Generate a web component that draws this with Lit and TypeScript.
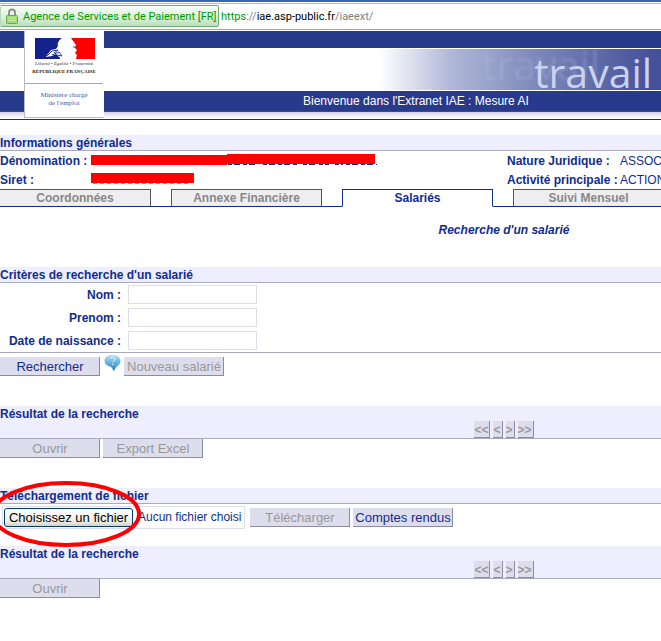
import { LitElement, html, css } from "lit";
import { customElement, property, state } from "lit/decorators.js";
import { classMap } from "lit/directives/class-map.js";

const base = css`
  * { box-sizing: border-box; }
  button, input { font: inherit; margin: 0; border-radius: 0; }
`;

@customElement("address-bar")
class AddressBar extends LitElement {
  static styles = [base, css`
    :host { display: block; }
    .bar {
      display: flex; align-items: center; height: 31px;
      border-top: 2px solid #3a66b4; border-bottom: 1px solid #fff;
      background: #fff; box-shadow: inset 0 1px #fff, inset 0 2px #b5b9c4, inset 0 -1px #a5a5a5;
      font: 11px Roboto, sans-serif; white-space: nowrap;
    }
    .identity {
      display: flex; align-items: center; gap: 5px; width: 219px; height: 22px;
      padding: 0 2px 0 5px; border: 1px solid #6fae72; border-left-color: #b7d9b7;
      border-radius: 2px; color: #009a00;
      background: linear-gradient(#f8fdf8, #d9efd9 60%, #b9deba);
    }
    .lock { flex: none; }
    .url { margin-left: 2px; color: #808080; }
    .secure { color: #009a00; }
    .host { color: #000; }
  `];
  render() {
    return html`<div class="bar">
      <span class="identity">
        <svg class="lock" width="12" height="16" viewBox="0 0 12 16" aria-hidden="true">
          <path d="M3 8V4.500a3 3 0 0 1 6 0V8" fill="none" stroke="#909090" stroke-width="2"/>
          <rect x=".5" y="7.500" width="11" height="8" rx="1" fill="#a2dc76" stroke="#66ad4a"/>
          <path d="M2 10h8M2 12.500h8" stroke="#c5eda5"/>
        </svg>
        <span>Agence de Services et de Paiement [FR]</span>
      </span>
      <span class="url"><span class="secure">https</span>://<span class="host">iae.asp-public.fr</span>/iaeext/</span>
    </div>`;
  }
}

@customElement("site-banner")
class SiteBanner extends LitElement {
  static styles = [base, css`
    :host { display: block; position: relative; border-bottom: 1px solid #102d8c; }
    .top { height: 17px; background: #283a8c; border-bottom: 1px solid #363656; }
    .middle {
      height: 43px; border: solid #fff; border-width: 1px 0;
      background: linear-gradient(90deg, #fff 380px, #b0b8d8 450px, #7b86b8 540px, #45529a 650px, #35459a 720px);
    }
    .word {
      display: block; margin-left: 534px; color: #c9d3f0;
      font: 41px/46px "Open Sans", sans-serif; position: relative;
    }
    .echo { position: absolute; left: -52px; top: -8px; color: #c5cdf0; opacity: .2; filter: blur(1px); }
    .bottom {
      height: 21px; background: #283a8c; color: #fff; border-bottom: 1px solid #4a4a68;
      font: 12px/20px "Liberation Sans", sans-serif; padding-left: 303px;
    }
    .shade { height: 7px; background: linear-gradient(#cfcfe0, #f2f2f9 60%, #fff); }
    .logo {
      position: absolute; left: 24px; top: 0; width: 80px; height: 87px; background: #fff;
      border: 1px solid #bbb; border-right-color: #fff; border-top: 0; text-align: center;
      font-family: "Liberation Serif", serif;
    }
    .flag { display: block; margin: 7px 0 0 10px; }
    .motto { font: italic 5px/9px "Liberation Serif", serif; color: #333; white-space: nowrap; }
    .rep { font: bold 5px/8px "Liberation Serif", serif; color: #222; white-space: nowrap; }
    .ministry { margin-top: 7px; border-top: 1px solid #aaa; padding-top: 7px; font-size: 7px; line-height: 8px; color: #3f5aac; }
  `];
  render() {
    return html`<header>
      <div class="top"></div>
      <div class="middle"><span class="word">travail<span class="echo" aria-hidden="true">travail</span></span></div>
      <div class="bottom">Bienvenue dans l'Extranet IAE : Mesure AI</div>
      <div class="shade"></div>
      <div class="logo">
        <svg class="flag" width="60" height="21" viewBox="0 0 60 21" aria-hidden="true">
          <path d="M0 0H27C24 2 22 5 23 8L21 11 16 12 12 17 11 19 17 18 21 16 25 20V21H0Z" fill="#14228c"/>
          <path d="M36 0H60V21H41L42 17 40 15 42 12 40 10 41 7Z" fill="#f00"/>
          <path d="M12 18l5-5 6-1-4 3M17 17l7-3 3 4-5-1" fill="none" stroke="#283a8c"/>
          <path d="M38 9h3" stroke="#444"/>
        </svg>
        <div class="motto">Liberté • Égalité • Fraternité</div>
        <div class="rep">RÉPUBLIQUE FRANÇAISE</div>
        <div class="ministry">Ministère chargé<br>de l'emploi</div>
      </div>
    </header>`;
  }
}

@customElement("section-band")
class SectionBand extends LitElement {
  @property() heading = "";
  @property({ type: Boolean }) pager = false;
  static styles = [base, css`
    :host { display: block; background: #eeeeff; border-bottom: 1px solid #aaaabf; }
    h2 { margin: 0; height: 15px; font: bold 12px/17px "Liberation Sans", sans-serif; color: #102d8c; }
    nav { display: flex; justify-content: center; gap: 3px; height: 17px; }
    button {
      padding: 0 1px 0 0; height: 17px; border: solid #8c8c9c; border-width: 0 1px 1px 0; background: #dddded;
      color: #999; font: bold 12px/18px "Liberation Sans", sans-serif;
    }
  `];
  render() {
    return html`<h2>${this.heading}</h2>
      ${this.pager ? html`<nav aria-label="Pages">${["<<", "<", ">", ">>"].map((t) => html`<button disabled>${t}</button>`)}</nav>` : ""}`;
  }
}

@customElement("app-root")
class AppRoot extends LitElement {
  @state() tab = "Salariés";

  static styles = [base, css`
    :host {
      display: block; overflow: hidden; background: #fff; color: #102d8c;
      font: 12px/15px "Liberation Sans", sans-serif;
    }
    .page { min-width: 1008px; }
    .info { margin-top: 15px; }
    .facts {
      display: grid; grid-template-columns: 91px 416px 113px 1fr; grid-auto-rows: 19px;
      line-height: 21px; white-space: nowrap; margin: 0;
    }
    dt { font-weight: bold; }
    dd { margin: 0; }
    .mask { display: block; margin-top: 3px; overflow: visible; }
    .tabs { display: flex; height: 18px; }
    .tabs::after { content: ""; flex: 1; border-bottom: 1px solid #102d8c; }
    .spacer { width: 20px; border-bottom: 1px solid #102d8c; }
    .tab {
      width: 151px; padding: 1px 0 0; border: 1px solid #555; border-bottom-color: #102d8c;
      background: #eee; color: #888; font-weight: bold; line-height: 15px;
    }
    .tab.first { border-left: 0; }
    .tab.active { background: #fff; color: #102d8c; border-color: #102d8c; border-bottom-color: #fff; }
    h1 { margin: 15px 0 29px; font: italic bold 12px/16px "Liberation Sans", sans-serif; text-align: center; }
    .criteria {
      display: grid; grid-template-columns: 121px 129px; grid-auto-rows: 19px;
      column-gap: 7px; row-gap: 4px; padding: 2px 0; border-bottom: 1px solid #aaaabf;
    }
    .criteria label { text-align: right; font-weight: bold; line-height: 21px; }
    .criteria input { height: 19px; width: 100%; border: 1px solid #dddded; background: #fff; }
    .actions { display: flex; gap: 3px; }
    .action {
      width: 100px; height: 19px; padding: 1px 0 0 1px; border: solid #8c8c9c; border-width: 0 1px 1px 0;
      background: #dddded; color: #102d8c; font-size: 13px; line-height: 18px; white-space: nowrap;
    }
    .action:disabled { color: #999; }
    .search { padding-top: 4px; margin-bottom: 30px; }
    .help { margin: -3px 0 0 1px; width: 17px; height: 18px; }
    .results { margin-bottom: 30px; }
    .upload { position: relative; align-items: center; height: 27px; margin-bottom: 15px; }
    .picker {
      display: flex; align-items: center; gap: 5px; width: 243px; height: 23px; margin: 0 2px;
      padding-left: 1px; border: 1px solid #dddded; font-size: 12px; white-space: nowrap;
    }
    .choose {
      width: 129px; height: 19px; padding: 0; border: 1px solid #003c74; border-radius: 3px;
      background: linear-gradient(#fff, #f0f0ea 70%, #d8d0c4); color: #000; font-size: 13px; line-height: 17px; flex: none;
    }
    .ring { position: absolute; left: -10px; top: -25px; pointer-events: none; }
  `];

  private pick() {
    this.renderRoot.querySelector<HTMLInputElement>("#file")?.click();
  }

  render() {
    const tabs = ["Coordonnées", "Annexe Financière", "Salariés", "Suivi Mensuel"];
    return html`<div class="page">
      <address-bar></address-bar>
      <site-banner></site-banner>
      <section-band class="info" heading="Informations générales"></section-band>
      <dl class="facts">
        <dt>Dénomination :</dt>
        <dd><svg class="mask" width="286" height="12" aria-hidden="true">
          <path d="M137 10.500h30m5 0h35m5 0h12m4 0h10m6 0h8m3 0h31" stroke="#102d8c" stroke-dasharray="4 2 6 3"/>
          <path d="M0 1H136V0H284V10H136V11H0Z" fill="#f00"/>
        </svg></dd>
        <dt>Nature Juridique :</dt><dd>ASSOC</dd>
        <dt>Siret :</dt>
        <dd><svg class="mask" width="103" height="12" aria-hidden="true">
          <path d="M2 10h96" stroke="#102d8c" stroke-dasharray="4 3"/>
          <path d="M0 0H103V10H0Z" fill="#f00"/>
        </svg></dd>
        <dt>Activité principale :</dt><dd>ACTION</dd>
      </dl>
      <div class="tabs">
        ${tabs.map((t, i) => html`${i ? html`<span class="spacer"></span>` : ""}<button
          class=${classMap({ tab: true, first: i === 0, active: t === this.tab })}
          @click=${() => (this.tab = t)}>${t}</button>`)}
      </div>
      <h1>Recherche d'un salarié</h1>
      <section-band heading="Critères de recherche d'un salarié"></section-band>
      <div class="criteria">
        <label for="nom">Nom :</label><input id="nom">
        <label for="prenom">Prenom :</label><input id="prenom">
        <label for="naissance">Date de naissance :</label><input id="naissance">
      </div>
      <div class="actions search">
        <button class="action">Rechercher</button>
        <svg class="help" viewBox="0 0 17 18" aria-hidden="true">
          <defs><linearGradient id="g" x2="0" y2="1"><stop stop-color="#b5e2f8"/><stop offset="1" stop-color="#1481c4"/></linearGradient></defs>
          <path d="M8.500 1C13 1 16.500 3 16.500 6.500S14 12 12.500 12.500L10 17 7 12.700C3 12 .500 10 .500 6.500S4 1 8.500 1Z" fill="url(#g)"/>
          <path d="M6.500 5C6.500 2.500 11 2.500 11 5 11 7 8.700 6.500 8.700 8.500" fill="none" stroke="#e4f5fd"/>
          <circle cx="8.700" cy="10.500" r=".7" fill="#e4f5fd"/>
        </svg>
        <button class="action" disabled>Nouveau salarié</button>
      </div>
      <section-band heading="Résultat de la recherche" pager></section-band>
      <div class="actions results">
        <button class="action" disabled>Ouvrir</button>
        <button class="action" disabled>Export Excel</button>
      </div>
      <section-band heading="Téléchargement de fichier"></section-band>
      <div class="actions upload">
        <div class="picker">
          <button class="choose" @click=${this.pick}>Choisissez un fichier</button>
          <span>Aucun fichier choisi</span>
          <input id="file" type="file" aria-label="Fichier" hidden>
        </div>
        <button class="action" disabled>Télécharger</button>
        <button class="action">Comptes rendus</button>
        <svg class="ring" width="154" height="70" aria-hidden="true">
          <ellipse cx="76" cy="35" rx="73" ry="31" fill="none" stroke="#f00" stroke-width="4"/>
        </svg>
      </div>
      <section-band heading="Résultat de la recherche" pager></section-band>
      <div class="actions">
        <button class="action" disabled>Ouvrir</button>
      </div>
    </div>`;
  }
}
